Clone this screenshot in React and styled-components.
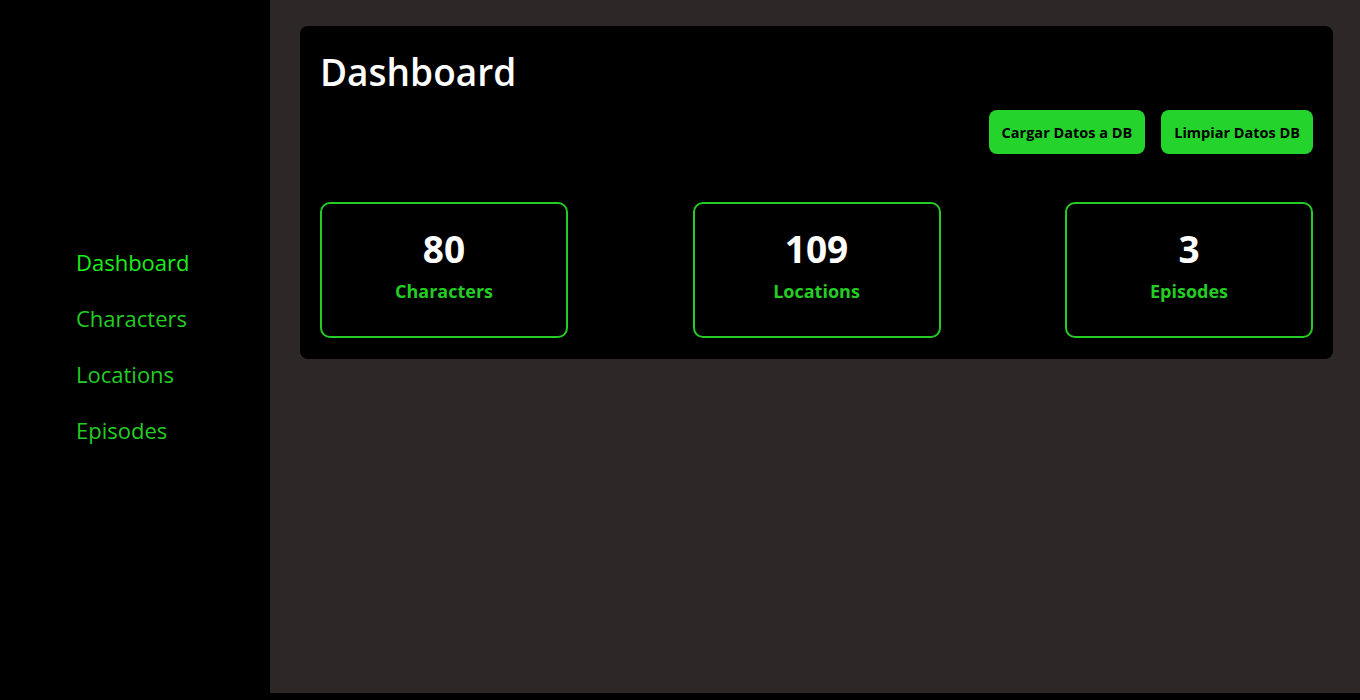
import { createGlobalStyle } from "styled-components";
import styled from "styled-components";

const GlobalStyle = createGlobalStyle`
  body {
    margin: 0;
    background: #000;
    font-family: "Open Sans", "Noto Sans", sans-serif;
  }
`;

const Layout = styled.div`
  display: flex;
  height: 700px;
`;

const Sidebar = styled.nav`
  width: 270px;
  flex-shrink: 0;
  background: #000;
  display: flex;
  flex-direction: column;
  justify-content: center;
  gap: 22px;
  padding: 0 0 8px 76px;
  box-sizing: border-box;
`;

const NavLink = styled.a`
  font-size: 22px;
  line-height: 34px;
  color: ${(p) => (p.$active ? "#1aee1a" : "#25cc25")};
  text-decoration: none;
  cursor: pointer;
`;

const Main = styled.main`
  flex: 1;
  height: 693px;
  background: #2d2827;
  padding: 26px 27px 0 30px;
  box-sizing: border-box;
`;

const Panel = styled.section`
  background: #000;
  border-radius: 8px;
  padding: 20px 20px 21px 20px;
`;

const Title = styled.h1`
  margin: 0;
  color: #fff;
  font-size: 37px;
  font-weight: 600;
  line-height: 52px;
`;

const Actions = styled.div`
  display: flex;
  justify-content: flex-end;
  gap: 16px;
  margin-top: 12px;
`;

const Button = styled.button`
  background: #25d32d;
  color: #000;
  border: none;
  border-radius: 8px;
  height: 44px;
  padding: 0 13px;
  font-family: inherit;
  font-size: 14.5px;
  font-weight: 700;
  cursor: pointer;
`;

const Cards = styled.div`
  display: flex;
  justify-content: space-between;
  margin-top: 48px;
`;

const Card = styled.div`
  width: 248px;
  height: 136px;
  box-sizing: border-box;
  border: 2px solid #25cc25;
  border-radius: 10px;
  display: flex;
  flex-direction: column;
  align-items: center;
  justify-content: center;
  padding-bottom: 9px;
`;

const Count = styled.div`
  color: #fff;
  font-size: 37px;
  font-weight: 700;
  line-height: 46px;
`;

const Label = styled.div`
  color: #25cc25;
  font-size: 18px;
  font-weight: 700;
  line-height: 28px;
  margin-top: 5px;
`;

const links = ["Dashboard", "Characters", "Locations", "Episodes"];
const stats = [
  { count: 80, label: "Characters" },
  { count: 109, label: "Locations" },
  { count: 3, label: "Episodes" },
];

export default function App() {
  return (
    <>
      <GlobalStyle />
      <Layout>
        <Sidebar>
          {links.map((l, i) => (
            <NavLink key={l} $active={i === 0}>
              {l}
            </NavLink>
          ))}
        </Sidebar>
        <Main>
          <Panel>
            <Title>Dashboard</Title>
            <Actions>
              <Button>Cargar Datos a DB</Button>
              <Button>Limpiar Datos DB</Button>
            </Actions>
            <Cards>
              {stats.map((s) => (
                <Card key={s.label}>
                  <Count>{s.count}</Count>
                  <Label>{s.label}</Label>
                </Card>
              ))}
            </Cards>
          </Panel>
        </Main>
      </Layout>
    </>
  );
}
